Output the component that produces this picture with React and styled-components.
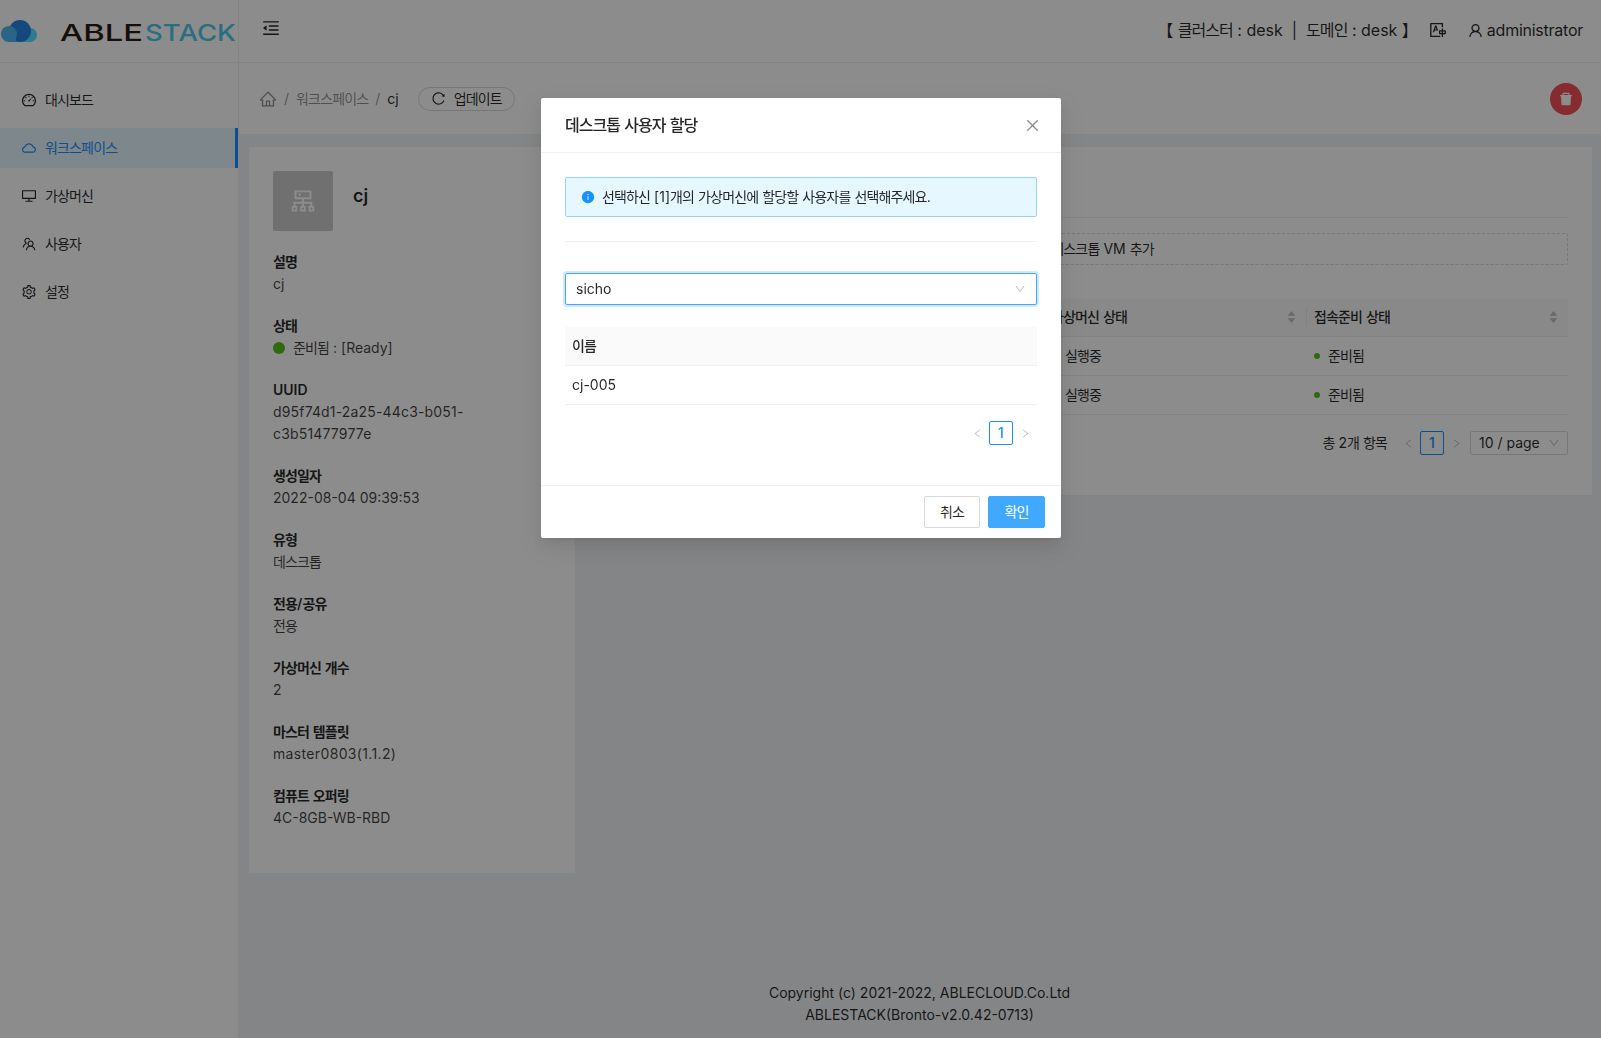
import React from "react";
import styled, { createGlobalStyle } from "styled-components";
import {
  AiOutlineDashboard, AiOutlineCloud, AiOutlineDesktop, AiOutlineTeam, AiOutlineSetting,
  AiOutlineMenuFold, AiOutlineTranslation, AiOutlineUser, AiOutlineHome, AiOutlineReload,
  AiFillDelete, AiOutlineCluster, AiFillInfoCircle, AiOutlineClose, AiOutlineDown,
  AiOutlineLeft, AiOutlineRight, AiFillCaretUp, AiFillCaretDown, AiOutlinePlus,
} from "react-icons/ai";

const FONT = `Inter, "Noto Sans CJK KR", "Liberation Sans", sans-serif`;

const Global = createGlobalStyle`
  html, body { margin: 0; padding: 0; height: 100%; }
  body {
    font-family: ${FONT};
    font-size: 14px;
    line-height: 22px;
    color: rgba(0,0,0,.85);
    background: #f0f2f5;
  }
  * { box-sizing: border-box; }
`;

const KoRun = styled.span`
  letter-spacing: -.06em;
`;
const K = ({ children }) => (
  <>
    {String(children).split(/([\uAC00-\uD7A3]+)/).map((part, i) =>
      i % 2 ? <KoRun key={i}>{part}</KoRun> : part
    )}
  </>
);

const Page = styled.div`
  height: 1038px;
  display: flex;
  flex-direction: column;
  overflow: hidden;
`;
const TopBar = styled.header`
  height: 63px;
  flex: none;
  display: flex;
  background: #fff;
  border-bottom: 1px solid #f0f0f0;
`;
const LogoArea = styled.div`
  width: 239px;
  flex: none;
  border-right: 1px solid #f0f0f0;
`;
const Fold = styled.div`
  padding: 18px 0 0 22px;
  font-size: 20px;
  line-height: 0;
  color: rgba(0,0,0,.85);
`;
const TopRight = styled.div`
  margin-left: auto;
  display: flex;
  align-items: center;
  height: 60px;
  padding-right: 18px;
  font-size: 16px;
`;
const ClusterInfo = styled.span`
  margin-right: 11px;
  white-space: pre;
`;
const AdminName = styled.span`
  letter-spacing: -.25px;
`;
const TopIcon = styled.span`
  display: inline-flex;
  font-size: ${p => p.$size}px;
  margin-right: ${p => p.$gap}px;
`;
const Body = styled.div`
  flex: 1;
  display: flex;
  min-height: 0;
`;
const Sider = styled.aside`
  width: 238px;
  flex: none;
  background: #fff;
`;
const Menu = styled.nav`
  height: 252px;
  padding-top: 17px;
  display: flex;
  flex-direction: column;
  gap: 8px;
`;
const MenuItem = styled.div`
  height: 40px;
  display: flex;
  align-items: center;
  padding-left: 21px;
  gap: 8px;
  color: ${p => (p.$active ? "#1890ff" : "rgba(0,0,0,.85)")};
  background: ${p => (p.$active ? "#e6f7ff" : "transparent")};
  border-right: ${p => (p.$active ? "3px solid #1890ff" : "0")};
  svg { font-size: 16px; }
`;
const Main = styled.main`
  flex: 1;
  min-width: 0;
  display: flex;
  flex-direction: column;
`;
const Crumbs = styled.div`
  height: 72px;
  flex: none;
  background: #fff;
  border-bottom: 1px solid #f0f0f0;
  border-left: 1px solid #f0f0f0;
  display: flex;
  align-items: center;
  padding: 0 19px 0 20px;
`;
const CrumbHome = styled.span`
  display: inline-flex;
  font-size: 18px;
  color: rgba(0,0,0,.45);
`;
const CrumbSep = styled.span`
  margin: 0 7px;
  color: rgba(0,0,0,.45);
`;
const CrumbLink = styled.span`
  color: rgba(0,0,0,.45);
`;
const CrumbNow = styled.span`
  color: rgba(0,0,0,.85);
`;
const PillButton = styled.button`
  height: 24px;
  margin-left: 19px;
  padding: 0 12px;
  border: 1px solid #d9d9d9;
  border-radius: 12px;
  background: #fff;
  display: inline-flex;
  align-items: center;
  gap: 8px;
  font: inherit;
  color: rgba(0,0,0,.85);
  svg { font-size: 15px; }
`;
const DangerRound = styled.button`
  margin-left: auto;
  width: 32px;
  height: 32px;
  border: 0;
  border-radius: 50%;
  background: #f5515a;
  color: #fff;
  display: flex;
  align-items: center;
  justify-content: center;
  font-size: 16px;
  padding: 0;
`;
const Content = styled.div`
  flex: 1;
  min-height: 0;
  display: flex;
  gap: 16px;
  align-items: flex-start;
  padding: 12px 9px 0 11px;
`;
const InfoCard = styled.section`
  width: 326px;
  height: 726px;
  flex: none;
  background: #fff;
  padding: 24px;
`;
const Head = styled.div`
  display: flex;
  gap: 20px;
  margin-bottom: 20px;
`;
const Avatar = styled.div`
  width: 60px;
  height: 60px;
  border-radius: 2px;
  background: #ccc;
  display: flex;
  align-items: center;
  justify-content: center;
  color: #fff;
  font-size: 30px;
`;
const CardTitle = styled.div`
  font-size: 18px;
  font-weight: 600;
  line-height: 50px;
`;
const Field = styled.div`
  margin-bottom: 20px;
`;
const Label = styled.div`
  font-weight: 600;
`;
const Value = styled.div`
  color: rgba(0,0,0,.75);
  letter-spacing: ${p => p.$track || 0}px;
`;
const BigDot = styled.i`
  display: inline-block;
  width: 12px;
  height: 12px;
  border-radius: 50%;
  background: #52c41a;
  margin-right: 8px;
  vertical-align: -1px;
`;
const VmCard = styled.section`
  flex: 1;
  height: 348px;
  background: #fff;
  padding: 70px 24px 0;
`;
const CardRule = styled.div`
  border-top: 1px solid #f0f0f0;
  margin-bottom: 15px;
`;
const DashedAdd = styled.div`
  height: 32px;
  border: 1px dashed #d9d9d9;
  border-radius: 2px;
  display: flex;
  align-items: center;
  justify-content: center;
  gap: 8px;
  margin-bottom: 33px;
`;
const VmRow = styled.div`
  display: grid;
  grid-template-columns: 428px 263px 1fr;
  height: 39px;
  align-items: center;
  background: ${p => (p.$head ? "#fafafa" : "transparent")};
  border-bottom: 1px solid #f0f0f0;
  font-weight: ${p => (p.$head ? 500 : 400)};
`;
const VmCell = styled.div`
  position: relative;
  height: 100%;
  padding: 0 8px;
  display: flex;
  align-items: center;
  justify-content: space-between;
  & + &::before {
    content: "";
    display: ${p => (p.$split ? "block" : "none")};
    position: absolute;
    left: 0;
    top: 10px;
    bottom: 10px;
    width: 1px;
    background: rgba(0,0,0,.06);
  }
`;
const Sort = styled.span`
  display: inline-flex;
  flex-direction: column;
  font-size: 11px;
  line-height: 0;
  color: #bfbfbf;
  margin-right: 1px;
  svg + svg { margin-top: -4px; }
`;
const Status = styled.span`
  display: inline-flex;
  align-items: center;
  gap: 8px;
`;
const Dot = styled.i`
  width: 6px;
  height: 6px;
  border-radius: 50%;
  background: #52c41a;
`;
const Pager = styled.div`
  display: flex;
  align-items: center;
  justify-content: flex-end;
  height: 24px;
  margin-top: 16px;
`;
const PagerTotal = styled.span`
  margin-right: 9px;
`;
const PagerArrow = styled.span`
  width: 24px;
  height: 24px;
  display: inline-flex;
  align-items: center;
  justify-content: center;
  font-size: 11px;
  color: rgba(0,0,0,.25);
`;
const PagerNum = styled.span`
  width: 24px;
  height: 24px;
  border: 1px solid #1890ff;
  border-radius: 2px;
  color: #1890ff;
  display: inline-flex;
  align-items: center;
  justify-content: center;
  font-weight: 500;
`;
const PageSize = styled.span`
  width: 98px;
  height: 24px;
  margin-left: 2px;
  border: 1px solid #d9d9d9;
  border-radius: 2px;
  padding: 0 7px 0 8px;
  display: inline-flex;
  align-items: center;
  justify-content: space-between;
  svg { font-size: 12px; color: rgba(0,0,0,.25); }
`;
const Footer = styled.footer`
  flex: none;
  height: 58px;
  padding-top: 2px;
  text-align: center;
`;
const Mask = styled.div`
  position: fixed;
  inset: 0;
  background: rgba(0,0,0,.45);
`;
const Modal = styled.div`
  position: fixed;
  left: 541px;
  top: 98px;
  width: 520px;
  height: 440px;
  background: #fff;
  border-radius: 2px;
  display: flex;
  flex-direction: column;
  box-shadow: 0 3px 6px -4px rgba(0,0,0,.12), 0 6px 16px rgba(0,0,0,.08), 0 9px 28px 8px rgba(0,0,0,.05);
`;
const ModalHead = styled.div`
  height: 55px;
  flex: none;
  padding: 0 20px 0 24px;
  border-bottom: 1px solid #f0f0f0;
  display: flex;
  align-items: center;
  justify-content: space-between;
  font-size: 16px;
  font-weight: 500;
  svg { font-size: 17px; color: rgba(0,0,0,.45); margin-top: 1px; }
`;
const ModalBody = styled.div`
  flex: 1;
  padding: 24px 24px 0;
`;
const Alert = styled.div`
  height: 40px;
  background: #e6f7ff;
  border: 1px solid #91d5ff;
  border-radius: 2px;
  padding: 0 15px;
  display: flex;
  align-items: center;
  gap: 7px;
  svg { font-size: 14px; color: #1890ff; }
`;
const AlertText = styled.span`
  white-space: pre;
`;
const Rule = styled.div`
  border-top: 1px solid #f0f0f0;
  margin: 24px 0 31px;
`;
const Select = styled.div`
  height: 32px;
  border: 1px solid #40a9ff;
  border-radius: 2px;
  box-shadow: 0 0 0 2px rgba(24,144,255,.2);
  padding: 0 10px;
  display: flex;
  align-items: center;
  justify-content: space-between;
  svg { font-size: 12px; color: rgba(0,0,0,.25); }
`;
const UserTable = styled.div`
  margin-top: 22px;
`;
const UserRow = styled.div`
  height: 39px;
  padding: 0 7px;
  display: flex;
  align-items: center;
  background: ${p => (p.$head ? "#fafafa" : "transparent")};
  border-bottom: 1px solid #f0f0f0;
  font-weight: ${p => (p.$head ? 500 : 400)};
`;
const ModalFoot = styled.div`
  height: 53px;
  flex: none;
  border-top: 1px solid #f0f0f0;
  padding: 10px 16px;
  display: flex;
  justify-content: flex-end;
  gap: 8px;
`;
const Btn = styled.button`
  height: 32px;
  width: ${p => (p.$primary ? 57 : 56)}px;
  padding: 0;
  font: inherit;
  border-radius: 2px;
  border: 1px solid ${p => (p.$primary ? "#40a9ff" : "#d9d9d9")};
  background: ${p => (p.$primary ? "#40a9ff" : "#fff")};
  color: ${p => (p.$primary ? "#fff" : "rgba(0,0,0,.85)")};
`;
const LogoSvg = styled.svg`
  display: block;
  margin-top: 18px;
`;

const Logo = () => (
  <LogoSvg width="238" height="30" viewBox="0 0 238 30">
    <circle cx="30" cy="17" r="7" fill="#52e0ff" />
    <rect x="14" y="18" width="16" height="6" fill="#52e0ff" />
    <circle cx="20" cy="13" r="11" fill="#2883e6" />
    <circle cx="9" cy="16" r="8" fill="#50b6f2" />
    <rect x="9" y="18" width="7" height="6" fill="#50b6f2" />
    <text x="60" y="23" fontFamily="Inter, sans-serif" fontSize="23" fontWeight="500" textLength="83" lengthAdjust="spacingAndGlyphs" fill="#2b1a14">ABLE</text>
    <text x="145" y="23" fontFamily="Inter, sans-serif" fontSize="23" fontWeight="500" textLength="91" lengthAdjust="spacingAndGlyphs" fill="#4cc8ea">STACK</text>
  </LogoSvg>
);

const menu = [
  [AiOutlineDashboard, "대시보드"],
  [AiOutlineCloud, "워크스페이스", true],
  [AiOutlineDesktop, "가상머신"],
  [AiOutlineTeam, "사용자"],
  [AiOutlineSetting, "설정"],
];
const fields = [
  ["설명", "cj"],
  ["상태", "status"],
  ["UUID", "d95f74d1-2a25-44c3-b051-c3b51477977e", 0.17],
  ["생성일자", "2022-08-04 09:39:53"],
  ["유형", "데스크톱"],
  ["전용/공유", "전용"],
  ["가상머신 개수", "2"],
  ["마스터 템플릿", "master0803(1.1.2)", 0.35],
  ["컴퓨트 오퍼링", "4C-8GB-WB-RBD"],
];
const SortIcon = () => (
  <Sort><AiFillCaretUp /><AiFillCaretDown /></Sort>
);

export default function App() {
  return (
    <>
      <Global />
      <Page>
        <TopBar>
          <LogoArea><Logo /></LogoArea>
          <Fold><AiOutlineMenuFold /></Fold>
          <TopRight>
            <ClusterInfo><K>{"【 클러스터 : desk  |  도메인 : desk 】"}</K></ClusterInfo>
            <TopIcon $size={18} $gap={20}><AiOutlineTranslation /></TopIcon>
            <TopIcon $size={17} $gap={3}><AiOutlineUser /></TopIcon>
            <AdminName>administrator</AdminName>
          </TopRight>
        </TopBar>
        <Body>
          <Sider>
            <Menu>
              {menu.map(([Icon, text, active]) => (
                <MenuItem key={text} $active={active}><Icon /><K>{text}</K></MenuItem>
              ))}
            </Menu>
          </Sider>
          <Main>
            <Crumbs>
              <CrumbHome><AiOutlineHome /></CrumbHome>
              <CrumbSep>/</CrumbSep>
              <CrumbLink><K>워크스페이스</K></CrumbLink>
              <CrumbSep>/</CrumbSep>
              <CrumbNow>cj</CrumbNow>
              <PillButton><AiOutlineReload /><K>업데이트</K></PillButton>
              <DangerRound><AiFillDelete /></DangerRound>
            </Crumbs>
            <Content>
              <InfoCard>
                <Head>
                  <Avatar><AiOutlineCluster /></Avatar>
                  <CardTitle>cj</CardTitle>
                </Head>
                {fields.map(([k, v, track]) => (
                  <Field key={k}>
                    <Label><K>{k}</K></Label>
                    {v === "status"
                      ? <Value><BigDot /><K>준비됨 : [Ready]</K></Value>
                      : <Value $track={track}><K>{v}</K></Value>}
                  </Field>
                ))}
              </InfoCard>
              <VmCard>
                <CardRule />
                <DashedAdd><AiOutlinePlus /><span><K>데스크톱 VM 추가</K></span></DashedAdd>
                <VmRow $head>
                  <VmCell $split><K>이름</K><SortIcon /></VmCell>
                  <VmCell $split><span><K>가상머신 상태</K></span><SortIcon /></VmCell>
                  <VmCell $split><span><K>접속준비 상태</K></span><SortIcon /></VmCell>
                </VmRow>
                {["cj-005", "cj-006"].map(n => (
                  <VmRow key={n}>
                    <VmCell>{n}</VmCell>
                    <VmCell><Status><Dot /><K>실행중</K></Status></VmCell>
                    <VmCell><Status><Dot /><K>준비됨</K></Status></VmCell>
                  </VmRow>
                ))}
                <Pager>
                  <PagerTotal><K>총 2개 항목</K></PagerTotal>
                  <PagerArrow><AiOutlineLeft /></PagerArrow>
                  <PagerNum>1</PagerNum>
                  <PagerArrow><AiOutlineRight /></PagerArrow>
                  <PageSize>10 / page<AiOutlineDown /></PageSize>
                </Pager>
              </VmCard>
            </Content>
            <Footer>
              Copyright (c) 2021-2022, ABLECLOUD.Co.Ltd<br />
              ABLESTACK(Bronto-v2.0.42-0713)
            </Footer>
          </Main>
        </Body>
      </Page>
      <Mask />
      <Modal>
        <ModalHead><span><K>데스크톱 사용자 할당</K></span><AiOutlineClose /></ModalHead>
        <ModalBody>
          <Alert><AiFillInfoCircle /><AlertText><K>선택하신 [1]개의 가상머신에 할당할 사용자를 선택해주세요.</K></AlertText></Alert>
          <Rule />
          <Select>sicho<AiOutlineDown /></Select>
          <UserTable>
            <UserRow $head><K>이름</K></UserRow>
            <UserRow>cj-005</UserRow>
          </UserTable>
          <Pager>
            <PagerArrow><AiOutlineLeft /></PagerArrow>
            <PagerNum>1</PagerNum>
            <PagerArrow><AiOutlineRight /></PagerArrow>
          </Pager>
        </ModalBody>
        <ModalFoot>
          <Btn><K>취소</K></Btn>
          <Btn $primary><K>확인</K></Btn>
        </ModalFoot>
      </Modal>
    </>
  );
}
